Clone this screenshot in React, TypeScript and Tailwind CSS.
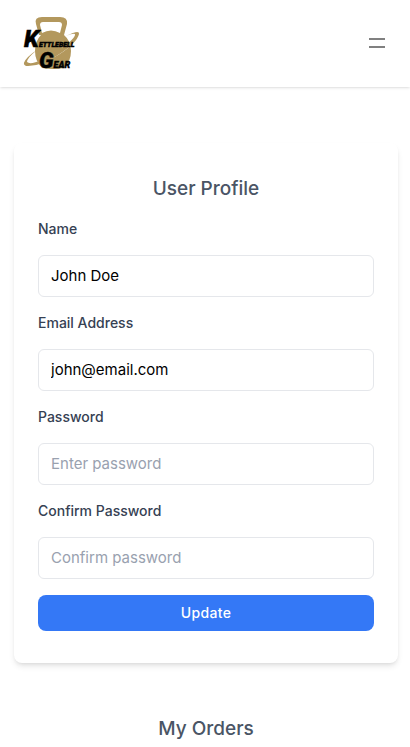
type FieldProps = {
  id: string;
  label: string;
  type: string;
  value?: string;
  placeholder?: string;
};

function Field({ id, label, type, value, placeholder }: FieldProps) {
  return (
    <div className="flex flex-col gap-4">
      <label htmlFor={id} className="text-sm font-medium text-gray-700">
        {label}
      </label>
      <input
        id={id}
        type={type}
        defaultValue={value}
        placeholder={placeholder}
        className="w-full rounded-md border border-gray-200 bg-white px-3 py-2 text-[15px] leading-6 text-black placeholder:text-gray-400"
      />
    </div>
  );
}

function Logo() {
  return (
    <svg viewBox="0 0 60 62" className="h-[62px] w-15" role="img" aria-label="Kettlebell Gear">
      <path
        fillRule="evenodd"
        fill="#b3985d"
        d="M22 5 H40 Q48 5 47 12 L44 23 Q51 29 51 39 Q51 49 44 56 Q33 58 22 56 Q15 49 15 39 Q15 29 21 23 H19 L16 12 Q14 5 22 5Z M23 10 Q20 10 20 13 L22 21 Q31 16 40 21 L42 13 Q42 10 39 10Z"
      />
      <path d="M48 24 Q58 18 57 23 Q55 31 38 42 Q20 53 9 52" fill="none" stroke="#fff" strokeWidth="2" />
      <path
        d="M46 24 Q60 17 59 22 Q57 31 38 43 Q20 55 6 54 Q1 52 8 45 Q12 41 17 38 Q7 46 7 50 Q10 53 22 48 Q35 42 46 33 Q56 25 55 22 Q53 21 46 24Z"
        fill="#b3985d"
      />
      <g
        fontFamily="Roboto, Liberation Sans, sans-serif"
        fontStyle="italic"
        fontWeight="900"
        fill="#000"
        stroke="#000"
        strokeWidth="0.400"
      >
        <text x="4" y="35" fontSize="24">
          K<tspan fontSize="7">ETTLEBELL</tspan>
        </text>
        <text x="19" y="56" fontSize="22">
          G<tspan fontSize="9">EAR</tspan>
        </text>
      </g>
    </svg>
  );
}

export default function App() {
  return (
    <div className="overflow-hidden bg-white font-['Inter',sans-serif]">
      <header className="flex items-center justify-between bg-white pt-3 pr-[21px] pb-[13px] pl-5 shadow">
        <a href="#home">
          <Logo />
        </a>
        <button type="button" aria-label="Open menu" className="flex w-6 flex-col items-center gap-1.5">
          <span className="h-0.5 w-4 bg-[#808080]" />
          <span className="h-0.5 w-4 bg-[#808080]" />
        </button>
      </header>
      <main className="flex flex-col items-center gap-13 pt-14 pr-3 pl-3.5">
        <section className="w-full max-w-sm rounded-lg bg-white px-6 py-8 shadow-md">
          <form className="flex flex-col gap-4">
            <h1 className="text-center text-[19px] leading-7 font-medium text-gray-600">User Profile</h1>
            <Field id="name" label="Name" type="text" value="John Doe" />
            <Field id="email" label="Email Address" type="email" value="john@email.com" />
            <Field id="password" label="Password" type="password" placeholder="Enter password" />
            <Field id="confirm" label="Confirm Password" type="password" placeholder="Confirm password" />
            <button type="button" className="rounded-lg bg-[#3478f6] py-2 text-sm font-medium tracking-wide text-white">
              Update
            </button>
          </form>
        </section>
        <h2 className="text-[19px] leading-7 font-medium text-gray-600">My Orders</h2>
      </main>
    </div>
  );
}
